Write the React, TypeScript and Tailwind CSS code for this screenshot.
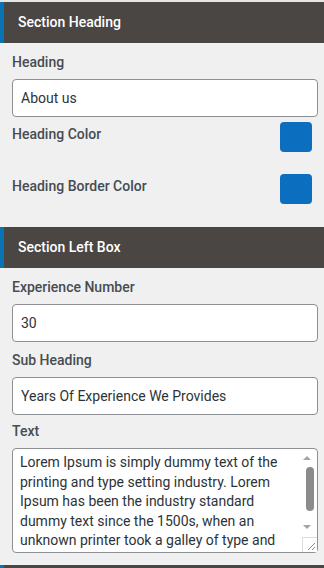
import React from 'react';

const LOREM =
  'Lorem Ipsum is simply dummy text of the printing and type setting industry. Lorem Ipsum has been the industry standard dummy text since the 1500s, when an unknown printer took a galley of type and scrambled it to make a type specimen book.';

function SectionHeader({ title }: { title?: string }) {
  return (
    <div className="flex h-[41px] items-center border-l-4 border-[#0873b5] bg-[#4a4644] pl-[14px] text-[14px] font-medium text-white">
      {title}
    </div>
  );
}

function Label({ children, className = '' }: { children: React.ReactNode; className?: string }) {
  return <div className={`h-5 text-[14px] font-medium leading-5 text-[#474c52] ${className}`}>{children}</div>;
}

function TextInput({ value, className = '' }: { value: string; className?: string }) {
  return (
    <input
      className={`block h-[38px] w-full rounded-[4px] border border-[#8c8f94] bg-white px-2 text-[14px] text-[#2c3338] outline-none ${className}`}
      defaultValue={value}
      type="text"
    />
  );
}

function ColorRow({ label, className = '' }: { label: string; className?: string }) {
  return (
    <div className={`flex items-start justify-between pr-[6px] ${className}`}>
      <Label className="mt-[2px]">{label}</Label>
      <div className="h-[30px] w-[32px] rounded-[4px] bg-[#0b6ebf]" />
    </div>
  );
}

function FakeTextarea() {
  return (
    <div className="relative mt-[7px]">
      <textarea
        className="block h-[105px] w-full resize-none overflow-hidden rounded-[4px] border border-[#8c8f94] bg-white pl-[7px] pr-[16px] pt-[4px] text-[14px] leading-[19.5px] text-[#2c3338] outline-none"
        defaultValue={LOREM}
        readOnly
      />
      {/* scrollbar drawn over the textarea */}
      <div className="absolute right-[7px] top-[8px] h-0 w-0 border-x-[4px] border-b-[4px] border-x-transparent border-b-[#a3a3a3]" />
      <div className="absolute right-[4px] top-[19px] h-[44px] w-[8px] rounded-full bg-[#8b8b8b]" />
      <div className="absolute right-[7px] top-[77px] h-0 w-0 border-x-[4px] border-t-[4px] border-x-transparent border-t-[#a3a3a3]" />
      <div className="absolute bottom-[1px] right-[1px] h-[15px] w-[15px] border-l border-t border-[#dcdcdc] bg-white">
        <svg className="absolute bottom-[2px] right-[2px]" height="8" viewBox="0 0 8 8" width="8">
          <path d="M1 8 L8 1 M5 8 L8 5" stroke="#8a8a8a" strokeWidth="1" />
        </svg>
      </div>
    </div>
  );
}

export default function App() {
  return (
    <div className="h-[568px] w-full overflow-hidden bg-[#f0f0f0]" style={{ fontFamily: 'Roboto, "Liberation Sans", sans-serif' }}>
      <div className="h-[2px] bg-[#e6e6e6]" />

      <SectionHeader title="Section Heading" />
      <div className="pb-[23px] pl-3 pr-[6px] pt-[9px]">
        <Label>Heading</Label>
        <TextInput className="mt-[7px]" value="About us" />
        <ColorRow className="mt-[5px]" label="Heading Color" />
        <ColorRow className="mt-[22px]" label="Heading Border Color" />
      </div>

      <SectionHeader title="Section Left Box" />
      <div className="pb-[12px] pl-3 pr-[6px] pt-[9px]">
        <Label>Experience Number</Label>
        <TextInput className="mt-[7px]" value="30" />
        <Label className="mt-[8px]">Sub Heading</Label>
        <TextInput className="mt-[7px]" value="Years Of Experience We Provides" />
        <Label className="mt-[6px]">Text</Label>
        <FakeTextarea />
      </div>

      <SectionHeader />
    </div>
  );
}
